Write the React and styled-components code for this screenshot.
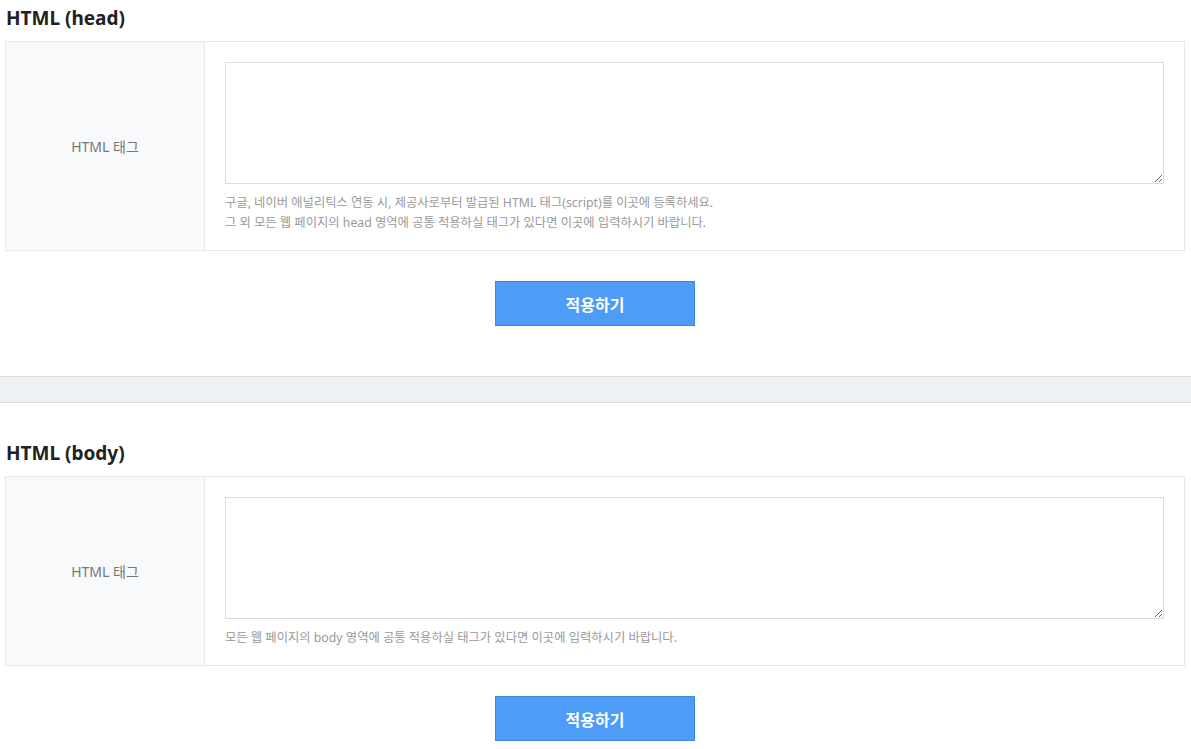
import React from "react";
import styled, { createGlobalStyle } from "styled-components";

const GlobalStyle = createGlobalStyle`
  html, body {
    margin: 0;
    padding: 0;
    background: #ffffff;
    font-family: "Noto Sans", "Noto Sans CJK KR", sans-serif;
  }
`;

const Section = styled.section`
  padding: ${(p) => p.$top}px 6px 0 5px;
`;

const Title = styled.h2`
  margin: 0 0 5px 1px;
  font-size: 19px;
  line-height: 36px;
  font-weight: 700;
  color: #222;
`;

const Table = styled.div`
  display: flex;
  border: 1px solid #e6e8eb;
`;

const LabelCell = styled.div`
  width: 198px;
  flex-shrink: 0;
  display: flex;
  align-items: center;
  justify-content: center;
  background: #f8f9fb;
  border-right: 1px solid #e6e8eb;
  font-size: 14px;
  color: #777;
`;

const FieldCell = styled.div`
  flex: 1;
  padding: 20px 20px 17px 20px;
`;

const TextArea = styled.textarea`
  display: block;
  width: 100%;
  height: 122px;
  box-sizing: border-box;
  border: 1px solid #dcdcdc;
  resize: vertical;
  font-family: inherit;
  font-size: 13px;
  padding: 6px 8px;
  outline: none;
`;

const Help = styled.p`
  margin: 9px 0 0;
  font-size: 12.3px;
  line-height: 20px;
  color: #999;
`;

const ButtonRow = styled.div`
  display: flex;
  justify-content: center;
  padding: 30px 0 ${(p) => p.$bottom}px;
`;

const ApplyButton = styled.button`
  width: 200px;
  height: 45px;
  background: #4d9cf8;
  border: 1px solid #3c88df;
  color: #fff;
  font-family: inherit;
  font-size: 16px;
  font-weight: 700;
  cursor: pointer;
`;

const Divider = styled.div`
  height: 25px;
  background: #eef1f4;
  border-top: 1px solid #d9dde2;
  border-bottom: 1px solid #d9dde2;
`;

const HtmlBlock = ({ title, help, top, bottom }) => (
  <Section $top={top}>
    <Title>{title}</Title>
    <Table>
      <LabelCell>HTML 태그</LabelCell>
      <FieldCell>
        <TextArea />
        <Help>
          {help.map((line, i) => (
            <React.Fragment key={i}>
              {i > 0 && <br />}
              {line}
            </React.Fragment>
          ))}
        </Help>
      </FieldCell>
    </Table>
    <ButtonRow $bottom={bottom}>
      <ApplyButton>적용하기</ApplyButton>
    </ButtonRow>
  </Section>
);

const App = () => {
  return (
    <>
      <GlobalStyle />
      <HtmlBlock
        title="HTML (head)"
        top={0}
        bottom={50}
        help={[
          "구글, 네이버 애널리틱스 연동 시, 제공사로부터 발급된 HTML 태그(script)를 이곳에 등록하세요.",
          "그 외 모든 웹 페이지의 head 영역에 공통 적용하실 태그가 있다면 이곳에 입력하시기 바랍니다.",
        ]}
      />
      <Divider />
      <HtmlBlock
        title="HTML (body)"
        top={32}
        bottom={40}
        help={["모든 웹 페이지의 body 영역에 공통 적용하실 태그가 있다면 이곳에 입력하시기 바랍니다."]}
      />
    </>
  );
};

export default App;
